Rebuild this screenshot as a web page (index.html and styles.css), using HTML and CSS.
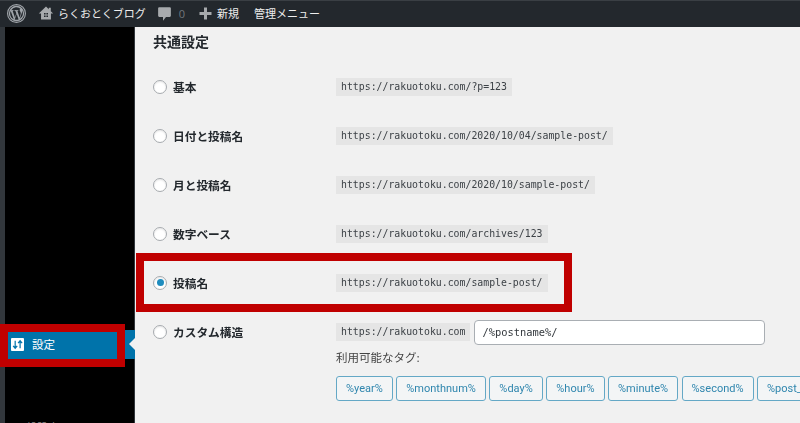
FILE: index.html
```html
<!DOCTYPE html>
<html lang="ja">
<head>
<meta charset="utf-8">
<title>共通設定</title>
<link rel="stylesheet" href="styles.css">
</head>
<body>
<div class="page">
  <header class="bar">
    <svg class="wp" viewBox="0 0 20 20"><circle cx="10" cy="10" r="9.400" fill="none" stroke="#a0a5aa" stroke-width="1.200"/><path fill="#a0a5aa" fill-rule="evenodd" d="M10 1.900a8.100 8.100 0 1 0 0 16.200 8.100 8.100 0 0 0 0-16.200zM3.300 10c0-1 .2-1.900.6-2.700L7.100 16a6.700 6.700 0 0 1-3.800-6zm11.200-.3c0 .6-.2 1.300-.5 2.300l-.7 2.200-2.400-7.100c.4 0 .8-.1.800-.1.400 0 .4-.6 0-.6 0 0-1.100.1-1.800.1s-1.800-.1-1.800-.1c-.4 0-.4.600 0 .6 0 0 .3.100.7.100l1 2.800-1.500 4.400L5.900 7.100c.4 0 .8-.1.800-.1.400 0 .4-.6 0-.6 0 0-1.100.1-1.800.1h-.5a6.700 6.700 0 0 1 10.100-1.300h-.1c-.7 0-1.100.6-1.100 1.200 0 .5.300 1 .6 1.500.3.500.6 1.100.6 1.800zm-4.300.9 2 5.600a6.700 6.700 0 0 1-4.100.1zm5.700-3.700a6.700 6.700 0 0 1-2.500 9l2-5.800c.4-.9.500-1.700.5-2.300 0-.3 0-.6 0-.9z"/></svg>
    <span class="item home">
      <svg class="ico" viewBox="0 0 20 20"><path fill="#a7aaad" fill-rule="evenodd" d="M10 2 1 10.500h2.800V18h12.400v-7.500H19L16 7.700V3.500h-2.500v1.800zM7.500 10h2v2h-2zm3 0h2v2h-2zm-3 3h2v2h-2zm3 0h2v2h-2z"/></svg>
      <span>らくおとくブログ</span>
    </span>
    <span class="item comment">
      <svg class="ico" viewBox="0 0 20 20"><path fill="#a7aaad" d="M3 1.500h14a1.500 1.500 0 0 1 1.500 1.500v10a1.500 1.500 0 0 1-1.500 1.500h-5L8 19.500v-5H3A1.500 1.500 0 0 1 1.500 13V3A1.500 1.500 0 0 1 3 1.500z"/></svg>
      <span class="count">0</span>
    </span>
    <span class="item new">
      <svg class="ico" viewBox="0 0 20 20"><path fill="#a7aaad" d="M8 2h4v6h6v4h-6v6H8v-6H2V8h6z"/></svg>
      <span>新規</span>
    </span>
    <span class="item">管理メニュー</span>
  </header>
  <div class="body">
    <aside class="side">
      <div class="menu">
        <svg class="set" viewBox="0 0 14 14"><rect width="14" height="14" rx="1" fill="#fff"/><path fill="none" stroke="#0073aa" stroke-width="1.300" d="M4.500 3v8M2.300 8.500 4.500 11l2.200-2.500M9.800 11V3M7.600 5.500 9.800 3 12 5.500"/></svg>
        <span>設定</span>
      </div>
      <div class="tail">一般設定</div>
      <div class="hl hl-menu"></div>
    </aside>
    <main class="main">
      <h2 class="title">共通設定</h2>
      <div class="rows">
        <div class="row"><label class="lab"><span class="radio"></span>基本</label><code class="url">https://rakuotoku.com/?p=123</code></div>
        <div class="row"><label class="lab"><span class="radio"></span>日付と投稿名</label><code class="url">https://rakuotoku.com/2020/10/04/sample-post/</code></div>
        <div class="row"><label class="lab"><span class="radio"></span>月と投稿名</label><code class="url">https://rakuotoku.com/2020/10/sample-post/</code></div>
        <div class="row"><label class="lab"><span class="radio"></span>数字ベース</label><code class="url">https://rakuotoku.com/archives/123</code></div>
        <div class="row"><label class="lab"><span class="radio on"></span>投稿名</label><code class="url">https://rakuotoku.com/sample-post/</code></div>
        <div class="row custom">
          <label class="lab"><span class="radio"></span>カスタム構造</label>
          <div class="cust">
            <div class="line"><code class="url">https://rakuotoku.com</code><span class="input">/%postname%/</span></div>
            <p class="avail">利用可能なタグ:</p>
            <div class="tags">
              <span class="tag">%year%</span><span class="tag">%monthnum%</span><span class="tag">%day%</span><span class="tag">%hour%</span><span class="tag">%minute%</span><span class="tag">%second%</span><span class="tag">%post_id%</span>
            </div>
          </div>
        </div>
      </div>
      <div class="hl hl-row"></div>
    </main>
  </div>
</div>
</body>
</html>
```
FILE: styles.css
```css
* { box-sizing: border-box; }
html, body { margin: 0; height: 100%; overflow: hidden; }
body { background: #f1f1f1; font-family: "Noto Sans CJK JP", "Open Sans", sans-serif; color: #23282d; }
.page { width: 800px; height: 423px; display: flex; flex-direction: column; overflow: hidden; filter: blur(.35px); }
.bar { height: 27px; flex: none; background: #23282d; border-top: 1px solid #3a3f44; color: #eee; display: flex; align-items: center; padding: 0 0 2px 7px; font-size: 11px; white-space: nowrap; }
.wp { width: 19px; height: 19px; margin-right: 12px; }
.item { display: flex; align-items: center; margin-right: 14px; }
.item.home { margin-right: 11px; }
.item.comment { margin-right: 13px; }
.item.new { margin-right: 15px; }
.ico { width: 15px; height: 15px; margin-right: 4px; }
.home .ico { width: 16px; height: 16px; }
.comment .ico { margin-right: 5px; }
.count { color: #72777c; font-family: "Open Sans", sans-serif; margin-left: 2px; font-size: 11px; }
.body { flex: 1; display: flex; position: relative; min-height: 0; }
.side { width: 135px; flex: none; background: #000; border-left: 5px solid #32373c; border-right: 1px solid #32373c; padding-top: 303px; color: #fff; font-size: 11.500px; position: relative; }
.menu { height: 29px; width: 130px; background: #0073aa; display: flex; align-items: center; padding: 0 0 1px 6px; gap: 8px; position: relative; }
.menu::after { content: ""; position: absolute; right: 0; top: 8px; border: 6px solid transparent; border-right-color: #f1f1f1; border-left-width: 0; }
.set { width: 13px; height: 13px; }
.tail { margin-top: 61px; padding-left: 10px; color: #888; font-size: 11px; line-height: 14px; }
.hl { position: absolute; border: 8px solid #c00000; }
.hl-menu { left: -5px; top: 297px; width: 125px; height: 43px; }
.main { flex: 1; position: relative; padding: 4px 0 0 18px; min-width: 0; }
.title { margin: 0; font-size: 14px; line-height: 20px; font-weight: 700; color: #23282d; }
.rows { margin-top: 11px; display: flex; flex-direction: column; }
.row { height: 49px; display: flex; align-items: center; flex: none; }
.row.custom { align-items: flex-start; padding-top: 11px; }
.lab { width: 183px; flex: none; display: flex; align-items: center; gap: 6px; font-size: 11.700px; font-weight: 700; color: #23282d; line-height: 16px; }
.custom .lab { height: 28px; }
.radio { width: 14px; height: 14px; border-radius: 50%; border: 1px solid #a5a9ad; background: #fff; box-shadow: inset 0 1px 2px rgba(0,0,0,.1); flex: none; position: relative; }
.radio.on::after { content: ""; position: absolute; left: 2.500px; top: 2.500px; width: 7px; height: 7px; border-radius: 50%; background: #1e8cbe; }
.url { background: #e5e5e5; color: #3c4146; font-family: "DejaVu Sans Mono", monospace; font-size: 9.850px; line-height: 18px; padding: 0 5px; display: block; white-space: nowrap; }
.cust { display: flex; flex-direction: column; min-width: 0; }
.line { display: flex; align-items: center; gap: 4px; height: 28px; }
.input { width: 291px; height: 25px; background: #fff; border: 1px solid #a9aeb3; border-radius: 4px; padding-left: 7px; font-family: "DejaVu Sans Mono", monospace; font-size: 10.400px; line-height: 23px; color: #32373c; }
.avail { margin: 3px 0 11px; font-size: 11.500px; line-height: 16px; color: #444; }
.tags { display: flex; gap: 3.500px; white-space: nowrap; }
.tag { height: 25px; padding: 0 9px; display: block; border: 1px solid #64a8c6; border-radius: 3px; background: #f3f5f6; color: #2f86ae; font-family: "Roboto", sans-serif; font-size: 11px; line-height: 23px; flex: none; }
.hl-row { left: 1px; top: 226px; width: 436px; height: 59px; }
```
